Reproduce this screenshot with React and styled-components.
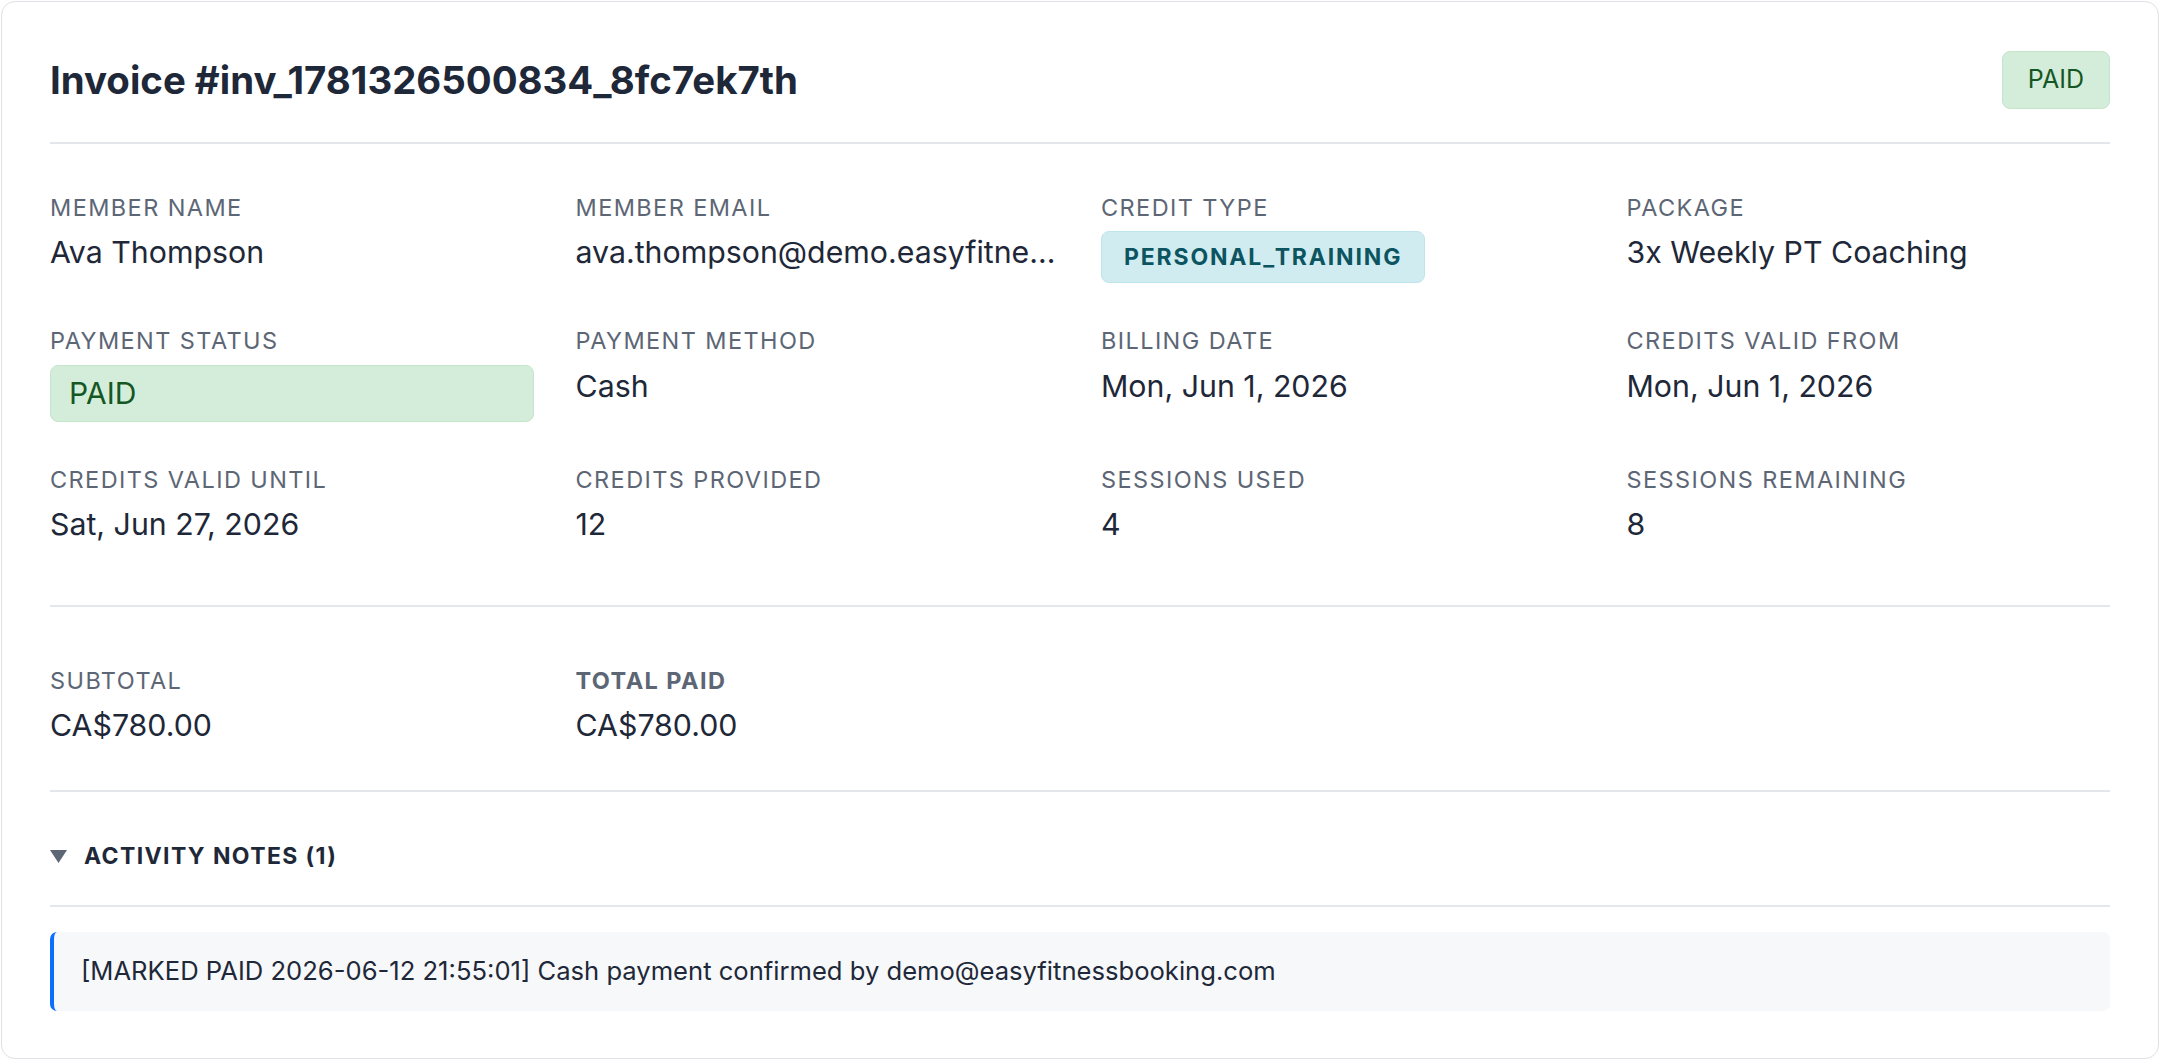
import React from "react";
import styled, { createGlobalStyle, css } from "styled-components";

const GlobalStyle = createGlobalStyle`
  * {
    box-sizing: border-box;
  }
  body {
    margin: 0;
    background: #ffffff;
    font-family: Inter, "Liberation Sans", Arial, sans-serif;
    color: #1f2937;
  }
`;

const Page = styled.main`
  padding: 1px;
`;

const Card = styled.section`
  background: #ffffff;
  border: 1px solid #dee2e6;
  border-radius: 14px;
  padding: 49px 48px 47px;
`;

const Header = styled.header`
  display: flex;
  justify-content: space-between;
  align-items: center;
  padding-bottom: 33px;
  border-bottom: 2px solid #e3e7eb;
`;

const Title = styled.h1`
  margin: 0;
  font-size: 38.4px;
  font-weight: 700;
  line-height: 1.2;
  color: #1e2838;
`;

const badgeColors = {
  success: css`
    background: #d4edda;
    border-color: #c3e6cb;
    color: #155724;
  `,
  info: css`
    background: #d1ecf1;
    border-color: #bee5eb;
    color: #0c5460;
  `,
};

const Badge = styled.span`
  display: ${({ $block }) => ($block ? "block" : "inline-block")};
  border: 1px solid;
  border-radius: 8px;
  line-height: 1.5;
  white-space: nowrap;
  ${({ $tone }) => badgeColors[$tone]}
  ${({ $size }) =>
    $size === "lg" &&
    css`
      font-size: 30px;
      padding: 5px 18px;
    `}
  ${({ $size }) =>
    $size === "md" &&
    css`
      font-size: 25px;
      padding: 9px 25px;
    `}
  ${({ $size }) =>
    $size === "sm" &&
    css`
      font-size: 23px;
      font-weight: 700;
      letter-spacing: 0.08em;
      padding: 8px 22px;
    `}
`;

const Section = styled.div`
  padding-top: ${({ $top }) => $top}px;
  padding-bottom: ${({ $bottom }) => $bottom || 0}px;
  border-bottom: ${({ $divider }) => ($divider ? "2px solid #e3e7eb" : "none")};
`;

const Grid = styled.div`
  display: grid;
  grid-template-columns: repeat(4, minmax(0, 1fr));
  column-gap: 42px;
  row-gap: 40px;
  align-items: start;
`;

const Field = styled.div`
  display: flex;
  flex-direction: column;
  align-items: ${({ $stretch }) => ($stretch ? "stretch" : "flex-start")};
  gap: 6px;
  min-width: 0;
`;

const Label = styled.span`
  font-size: 23.5px;
  line-height: 1.5;
  text-transform: uppercase;
  letter-spacing: 0.06em;
  font-weight: ${({ $strong }) => ($strong ? 700 : 400)};
  color: #5d6675;
`;

const Value = styled.span`
  display: block;
  max-width: 100%;
  font-size: 30.3px;
  line-height: 1.45;
  color: #1e2838;
  white-space: nowrap;
  overflow: hidden;
  text-overflow: ellipsis;
`;

const NotesHeader = styled.div`
  display: flex;
  align-items: center;
  gap: 17px;
  padding-bottom: 32px;
  border-bottom: 2px solid #e3e7eb;
  cursor: pointer;
`;

const NotesTitle = styled.span`
  font-size: 23px;
  line-height: 1.5;
  font-weight: 700;
  letter-spacing: 0.06em;
  text-transform: uppercase;
  color: #1e2838;
`;

const NoteList = styled.div`
  display: flex;
  flex-direction: column;
  gap: 12px;
  padding-top: 25px;
`;

const Note = styled.div`
  background: #f6f8fa;
  border-left: 4px solid #0d6efd;
  border-radius: 7px;
  padding: 20px 28px 20px 27px;
  font-size: 25.6px;
  line-height: 1.5;
  color: #1e2838;
`;

const details = [
  { label: "Member Name", value: "Ava Thompson" },
  { label: "Member Email", value: "ava.thompson@demo.easyfitnessbooking.com" },
  { label: "Credit Type", badge: { text: "PERSONAL_TRAINING", tone: "info", size: "sm" } },
  { label: "Package", value: "3x Weekly PT Coaching" },
  { label: "Payment Status", badge: { text: "PAID", tone: "success", size: "lg", block: true } },
  { label: "Payment Method", value: "Cash" },
  { label: "Billing Date", value: "Mon, Jun 1, 2026" },
  { label: "Credits Valid From", value: "Mon, Jun 1, 2026" },
  { label: "Credits Valid Until", value: "Sat, Jun 27, 2026" },
  { label: "Credits Provided", value: "12" },
  { label: "Sessions Used", value: "4" },
  { label: "Sessions Remaining", value: "8" },
];

const totals = [
  { label: "Subtotal", value: "CA$780.00" },
  { label: "Total Paid", value: "CA$780.00", strong: true },
];

const notes = [
  "[MARKED PAID 2026-06-12 21:55:01] Cash payment confirmed by demo@easyfitnessbooking.com",
];

function DetailField({ item }) {
  const block = item.badge && item.badge.block;
  return (
    <Field $stretch={block}>
      <Label $strong={item.strong}>{item.label}</Label>
      {item.badge ? (
        <Badge $tone={item.badge.tone} $size={item.badge.size} $block={block}>
          {item.badge.text}
        </Badge>
      ) : (
        <Value>{item.value}</Value>
      )}
    </Field>
  );
}

export default function App() {
  return (
    <>
      <GlobalStyle />
      <Page>
        <Card>
          <Header>
            <Title>Invoice #inv_1781326500834_8fc7ek7th</Title>
            <Badge $tone="success" $size="md">
              PAID
            </Badge>
          </Header>

          <Section $top={46} $bottom={58} $divider>
            <Grid>
              {details.map((item) => (
                <DetailField key={item.label} item={item} />
              ))}
            </Grid>
          </Section>

          <Section $top={56} $bottom={42} $divider>
            <Grid>
              {totals.map((item) => (
                <DetailField key={item.label} item={item} />
              ))}
            </Grid>
          </Section>

          <Section $top={47}>
            <NotesHeader>
              <svg width="17" height="13" viewBox="0 0 17 13" aria-hidden="true">
                <polygon points="0,0 17,0 8.5,13" fill="#5d6675" />
              </svg>
              <NotesTitle>Activity Notes ({notes.length})</NotesTitle>
            </NotesHeader>
            <NoteList>
              {notes.map((note) => (
                <Note key={note}>{note}</Note>
              ))}
            </NoteList>
          </Section>
        </Card>
      </Page>
    </>
  );
}
